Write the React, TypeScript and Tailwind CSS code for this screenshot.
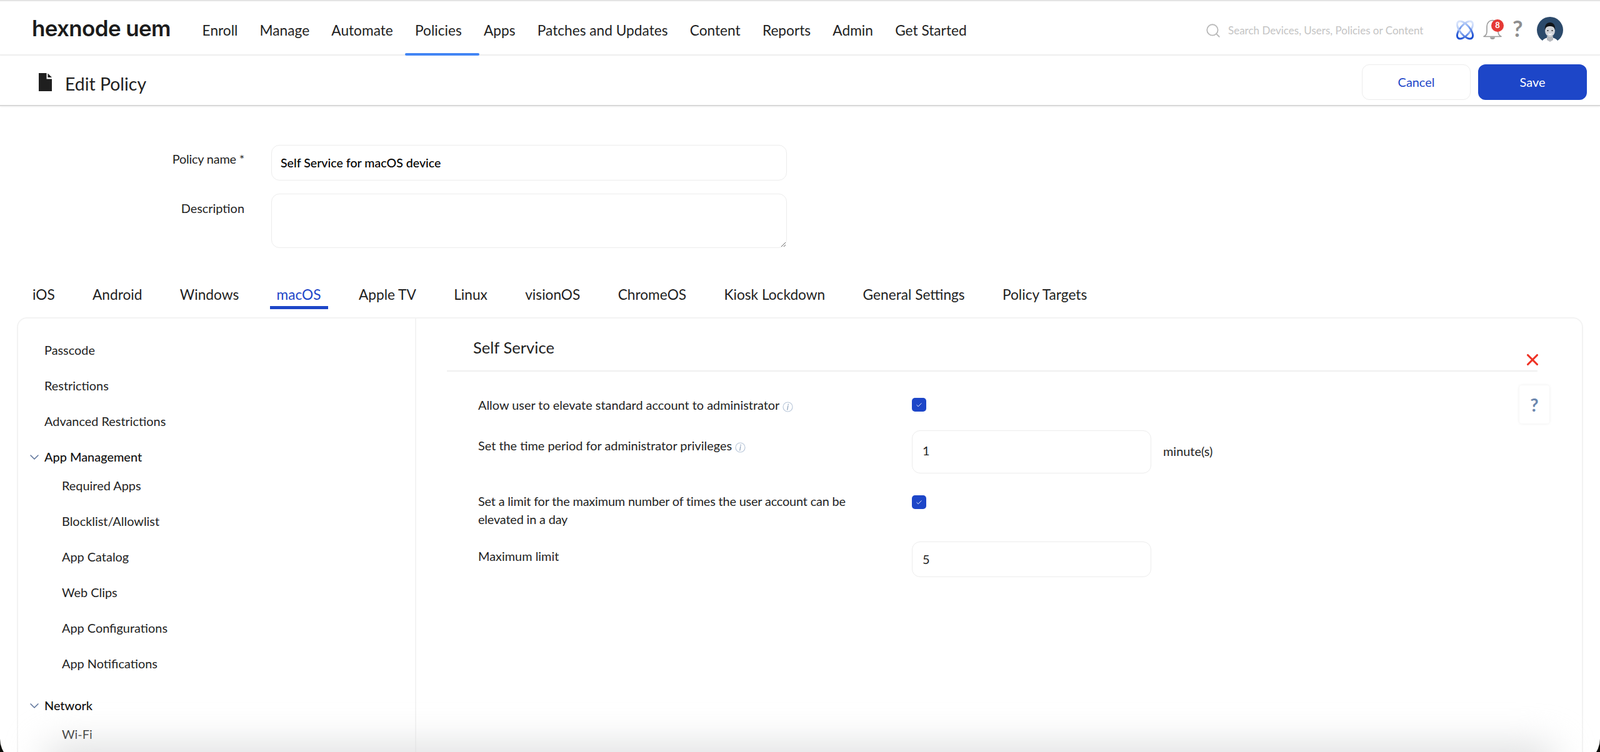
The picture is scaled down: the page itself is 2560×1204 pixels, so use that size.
import { Check, ChevronDown, Search, X } from "lucide-react";

const navItems = ["Enroll", "Manage", "Automate", "Policies", "Apps", "Patches and Updates", "Content", "Reports", "Admin", "Get Started"];
const tabs = ["iOS", "Android", "Windows", "macOS", "Apple TV", "Linux", "visionOS", "ChromeOS", "Kiosk Lockdown", "General Settings", "Policy Targets"];
const appItems = ["Required Apps", "Blocklist/Allowlist", "App Catalog", "Web Clips", "App Configurations", "App Notifications"];

function AtomIcon() {
  return (
    <svg width="34" height="32" viewBox="0 0 34 32" fill="none" className="absolute left-[2327px] top-[32px]">
      <defs>
        <linearGradient id="atom" gradientUnits="userSpaceOnUse" x1="17" y1="0" x2="17" y2="32">
          <stop offset="0" stopColor="#d6e2fb" />
          <stop offset="0.45" stopColor="#8fb0f2" />
          <stop offset="1" stopColor="#1c4fd2" />
        </linearGradient>
      </defs>
      <ellipse cx="17" cy="16" rx="8" ry="17" transform="rotate(40 17 16)" stroke="url(#atom)" strokeWidth="3" />
      <ellipse cx="17" cy="16" rx="8" ry="17" transform="rotate(-40 17 16)" stroke="url(#atom)" strokeWidth="3" />
    </svg>
  );
}

function BellIcon() {
  return (
    <div className="absolute left-[2373px] top-[31px] h-[34px] w-[34px]">
      <svg width="30" height="33" viewBox="0 0 30 33" fill="none" stroke="#9a9a9a" strokeWidth="1.6">
        <path d="M1 27.500c3.500-1.500 5-4 5-8.500V11.500C6 5.500 10 1.500 15 1.500s9 4 9 10v7.500c0 4.500 1.500 7 5 8.500z" strokeLinejoin="round" />
        <path d="M11 28.500c0 2.500 1.800 3.500 4 3.500s4-1 4-3.500z" fill="#9a9a9a" stroke="none" />
      </svg>
      <span className="absolute left-[13px] top-0 flex h-[20px] w-[20px] items-center justify-center rounded-full bg-[#e53935] [font-family:'Liberation_Sans',sans-serif] text-[13px] font-bold text-white">
        8
      </span>
    </div>
  );
}

function Avatar() {
  return (
    <svg width="44" height="44" viewBox="0 0 44 44" className="absolute left-[2458px] top-[26px]">
      <circle cx="22" cy="22" r="21" fill="#2c4a6b" />
      <path d="M8 43c2-7 8-9 14-9s12 2 14 9z" fill="#ffffff" />
      <path d="M17 32h10v6l-5 3-5-3z" fill="#b5b8bd" />
      <ellipse cx="22" cy="23" rx="8" ry="10" fill="#d3d5da" />
      <path d="M14 22c-1-8 3-12 8-12s9 4 8 12c-1-4-3-6-8-6s-7 2-8 6z" fill="#111418" />
      <circle cx="18.500" cy="23" r="1.100" fill="#222" />
      <circle cx="25.500" cy="23" r="1.100" fill="#222" />
      <path d="M19 28c2 1.500 4 1.500 6 0" stroke="#fff" strokeWidth="1.500" fill="none" />
    </svg>
  );
}

function InfoIcon() {
  return (
    <svg width="17" height="19" viewBox="0 0 17 19" fill="none" className="ml-[5px] inline-block align-[-5px]">
      <circle cx="8.500" cy="9.500" r="7.500" stroke="#bac8da" strokeWidth="1.200" />
      <path d="M9.200 5.200v.8M8.800 8l-1 6" stroke="#93a6bf" strokeWidth="1.400" strokeLinecap="round" />
    </svg>
  );
}

function Checkbox({ top }: { top: string }) {
  return (
    <div className={`absolute left-[1459px] flex h-[22px] w-[23px] items-center justify-center rounded-[5px] bg-[#1d46c8] ${top}`}>
      <Check size={11} color="#ffffff" strokeWidth={2} />
    </div>
  );
}

function SideItem({ label }: { label: string }) {
  return <div className="flex h-[57px] items-center pl-[42px] text-[19.9px] text-[#1f1f1f]">{label}</div>;
}

function GroupHeading({ label, className }: { label: string; className: string }) {
  return (
    <div className={`flex h-[35px] items-center pl-[14px] text-[19.9px] font-medium text-[#111] ${className}`}>
      <ChevronDown size={24} color="#5b7299" strokeWidth={1.500} className="mr-[4px]" />
      {label}
    </div>
  );
}

export default function App() {
  return (
    <div className="relative h-[1204px] w-[2560px] overflow-hidden bg-[#0c0d08] [font-family:Lato,sans-serif] text-[#1f1f1f]">
      <div className="relative h-[1223px] w-[2560px] overflow-hidden rounded-b-[40px] bg-white">
        {/* top nav */}
        <div className="flex h-[89px] items-center border-t-2 border-b-2 border-t-[#e4e4e4] border-b-[#efefef] bg-white">
          <div className="ml-[51px] w-[238px] pt-[1px] [font-family:Inter,sans-serif] text-[35px] leading-none font-semibold tracking-[-0.65px] text-[#1c1c1c]">hexnode uem</div>
          <nav className="ml-[17px] flex h-full">
            {navItems.map((item) => (
              <div key={item} className="flex h-full items-center px-[17.6px] pt-[10px] text-[22.7px]">
                {item}
              </div>
            ))}
          </nav>
        </div>
        <div className="absolute top-[85px] left-[648px] h-[4px] w-[119px] rounded-[2px] bg-[#4285f4]" />
        <Search size={26} color="#b9b9b9" strokeWidth={1.700} className="absolute left-[1928px] top-[36px]" />
        <div className="absolute left-[1965px] top-[38px] text-[17px] leading-[22px] text-[#c4c4c4]">Search Devices, Users, Policies or Content</div>
        <AtomIcon />
        <BellIcon />
        <div className="absolute left-[2420px] top-[23px] [font-family:'Liberation_Sans',sans-serif] text-[36px] leading-[44px] font-bold text-[#8e8e8e]">?</div>
        <Avatar />

        {/* page title */}
        <div className="flex h-[81px] items-center justify-between border-b-2 border-[#d8d8d8] pr-[21px] pl-[62px] shadow-[0_1px_3px_rgba(0,0,0,0.06)]">
          <div className="mt-[12px] flex items-center">
            <svg width="21" height="29" viewBox="0 0 21 29" className="mt-[-6px]" fill="#1f1f1f">
              <path d="M0 0h12.500v9.500H21V29H0z" />
              <path d="M14.500 0.500 21 7h-6.500z" />
            </svg>
            <div className="ml-[21px] text-[28.4px] leading-none">Edit Policy</div>
          </div>
          <div className="mt-[6px] flex gap-[12px]">
            <button className="h-[57px] w-[174px] rounded-[12px] border border-[#ececec] bg-white text-[19.9px] text-[#1d46c8]">Cancel</button>
            <button className="h-[57px] w-[174px] rounded-[12px] bg-[#1d46c8] text-[19.9px] text-white">Save</button>
          </div>
        </div>

        {/* policy form */}
        <div className="absolute top-[241px] right-[2169px] text-[19.9px] leading-[26px] tracking-[-0.2px]">Policy name *</div>
        <input
          readOnly
          value="Self Service for macOS device"
          className="absolute top-[232px] left-[434px] h-[57px] w-[825px] rounded-[13px] border border-[#ececec] pl-[14px] text-[19.6px] font-medium text-black outline-none"
        />
        <div className="absolute top-[320px] right-[2169px] text-[19.9px] leading-[26px]">Description</div>
        <textarea readOnly className="absolute top-[310px] left-[434px] h-[87px] w-[825px] rounded-[13px] border border-[#ececec] outline-none" />

        {/* platform tabs */}
        <div className="absolute top-[450px] left-[41px] flex h-[45px] gap-[38.3px]">
          {tabs.map((tab) => (
            <div
              key={tab}
              className={`flex h-full items-center border-b-[5px] px-[11px] pt-[4px] text-[22.7px] ${tab === "macOS" ? "border-[#1d46c8] text-[#1d46c8]" : "border-transparent"}`}
            >
              {tab}
            </div>
          ))}
        </div>

        {/* settings panel */}
        <div className="absolute top-[508px] left-[27px] flex h-[720px] w-[2506px] rounded-[16px] border-2 border-[#f3f3f3] bg-white">
          <div className="h-full w-[637px] border-r-2 border-[#f3f3f3] pt-[22.5px]">
            <SideItem label="Passcode" />
            <SideItem label="Restrictions" />
            <SideItem label="Advanced Restrictions" />
            <GroupHeading label="App Management" className="mt-[11px]" />
            <div className="pl-[28px]">
              {appItems.map((item) => (
                <SideItem key={item} label={item} />
              ))}
            </div>
            <GroupHeading label="Network" className="mt-[21px]" />
            <div className="pl-[28px]">
              <SideItem label="Wi-Fi" />
            </div>
          </div>
        </div>

        <div className="absolute top-[539px] left-[757px] text-[25.6px] leading-[34px]">Self Service</div>
        <div className="absolute top-[593px] left-[715px] h-[2px] w-[1745px] bg-[#f0f0f0]" />
        <X size={30} color="#ee3124" strokeWidth={2.500} className="absolute left-[2437px] top-[561px]" />
        <div className="absolute top-[617px] left-[2431px] flex h-[61px] w-[48px] items-center justify-center rounded-[4px] bg-white [font-family:'Liberation_Sans',sans-serif] text-[29px] font-bold text-[#6b86ad] shadow-[0_0_5px_rgba(0,0,0,0.08)]">
          ?
        </div>

        <div className="absolute top-[634px] left-[765px] text-[19.9px] leading-[28px]">
          Allow user to elevate standard account to administrator
          <InfoIcon />
        </div>
        <Checkbox top="top-[637px]" />

        <div className="absolute top-[699px] left-[765px] text-[19.9px] leading-[28px]">
          Set the time period for administrator privileges
          <InfoIcon />
        </div>
        <input readOnly value="1" className="absolute top-[689px] left-[1459px] h-[69px] w-[383px] rounded-[13px] border border-[#ececec] pb-[5px] pl-[16px] text-[19.9px] outline-none" />
        <div className="absolute top-[708px] left-[1861px] text-[19.9px] leading-[28px]">minute(s)</div>

        <div className="absolute top-[788px] left-[765px] w-[600px] text-[19.9px] leading-[29px] tracking-[-0.17px]">
          Set a limit for the maximum number of times the user account can be elevated in a day
        </div>
        <Checkbox top="top-[793px]" />

        <div className="absolute top-[876px] left-[765px] text-[19.9px] leading-[28px]">Maximum limit</div>
        <input readOnly value="5" className="absolute top-[867px] left-[1459px] h-[57px] w-[383px] rounded-[13px] border border-[#ececec] pb-[2px] pl-[16px] text-[19.9px] outline-none" />

        {/* bottom window shadow */}
        <div className="absolute top-[1196px] left-[70px] h-[50px] w-[2420px] rounded-[40px] bg-[#d8d9da] blur-[30px]" />
      </div>
    </div>
  );
}
